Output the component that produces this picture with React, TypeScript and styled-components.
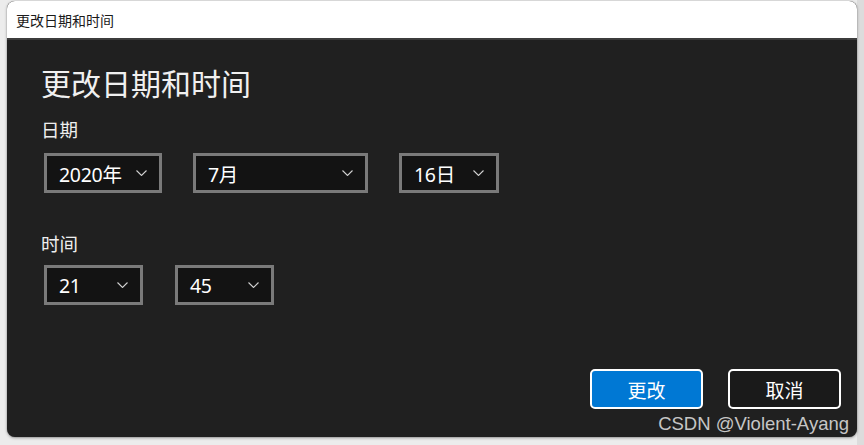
import React from "react";
import styled, { createGlobalStyle } from "styled-components";

const Global = createGlobalStyle`
  html, body { margin: 0; padding: 0; }
  body {
    background: #e4e4e4;
    font-family: "Noto Sans", "Noto Sans CJK SC", sans-serif;
    overflow: hidden;
  }
`;

const Page = styled.div`
  width: 864px;
  height: 445px;
  box-sizing: border-box;
  padding: 1px 0 0 7px;
  background: linear-gradient(to right, #ececec 0, #ececec 857px, #dcdcdc 857px);
`;

const Window = styled.div`
  width: 850px;
  height: 436px;
  border-radius: 8px;
  overflow: hidden;
  display: flex;
  flex-direction: column;
  background: #202020;
  box-shadow: 0 1px 3px rgba(0, 0, 0, 0.35), 0 0 1px rgba(0, 0, 0, 0.4);
`;

const TitleBar = styled.div`
  height: 37px;
  flex: none;
  background: #ffffff;
  border-bottom: 2px solid #3c3c3c;
  display: flex;
  align-items: center;
  padding-left: 9px;
  font-family: "Noto Sans CJK SC", sans-serif;
  font-size: 14px;
  color: #1a1a1a;
`;

const Body = styled.div`
  flex: 1;
  position: relative;
  padding: 20px 0 0 34px;
  display: flex;
  flex-direction: column;
  color: #f2f2f2;
`;

const Heading = styled.h1`
  margin: 0;
  font-family: "Noto Sans CJK SC", sans-serif;
  font-weight: 400;
  font-size: 30px;
  line-height: 44px;
  color: #f0f0f0;
`;

const Label = styled.div<{ $top: number }>`
  margin-top: ${(p) => p.$top}px;
  font-family: "Noto Sans CJK SC", sans-serif;
  font-size: 18.5px;
  line-height: 26px;
  color: #eeeeee;
`;

const Row = styled.div<{ $top: number; $gap: number }>`
  display: flex;
  margin-top: ${(p) => p.$top}px;
  margin-left: 3px;
  gap: ${(p) => p.$gap}px;
`;

const Combo = styled.div<{ $w: number }>`
  width: ${(p) => p.$w}px;
  height: 40px;
  box-sizing: border-box;
  border: 3px solid #7a7a7a;
  background: #131313;
  display: flex;
  align-items: center;
  justify-content: space-between;
  padding: 0 12px 0 12px;
  font-size: 19.5px;
  color: #ffffff;
`;

const ComboText = styled.span`
  font-family: "Noto Sans", "Noto Sans CJK SC", sans-serif;
  letter-spacing: -0.3px;
`;

const Chevron = () => (
  <svg width="11" height="6" viewBox="0 0 11 6" fill="none">
    <path d="M0.5 0.5 L5.5 5.5 L10.5 0.5" stroke="#cfcfcf" strokeWidth="1.1" />
  </svg>
);

const Footer = styled.div`
  position: absolute;
  right: 16px;
  bottom: 28px;
  display: flex;
  gap: 25px;
`;

const Button = styled.button<{ $primary?: boolean }>`
  width: 113px;
  height: 40px;
  box-sizing: border-box;
  border: 2px solid #ffffff;
  border-radius: 5px;
  background: ${(p) => (p.$primary ? "#0078d4" : "#1a1a1a")};
  color: #ffffff;
  font-family: "Noto Sans CJK SC", sans-serif;
  font-size: 19px;
  padding: 0;
  display: flex;
  align-items: center;
  justify-content: center;
`;

const Watermark = styled.div`
  position: absolute;
  right: 8px;
  bottom: 2px;
  font-family: "Liberation Sans", Arial, sans-serif;
  font-size: 18.5px;
  color: #c6c6c6;
`;

export default function App() {
  return (
    <>
      <Global />
      <Page>
        <Window>
          <TitleBar>更改日期和时间</TitleBar>
          <Body>
            <Heading>更改日期和时间</Heading>
            <Label $top={12}>日期</Label>
            <Row $top={11} $gap={31}>
              <Combo $w={118}>
                <ComboText>2020年</ComboText>
                <Chevron />
              </Combo>
              <Combo $w={175}>
                <ComboText>7月</ComboText>
                <Chevron />
              </Combo>
              <Combo $w={100}>
                <ComboText>16日</ComboText>
                <Chevron />
              </Combo>
            </Row>
            <Label $top={37}>时间</Label>
            <Row $top={9} $gap={32}>
              <Combo $w={99}>
                <ComboText>21</ComboText>
                <Chevron />
              </Combo>
              <Combo $w={99}>
                <ComboText>45</ComboText>
                <Chevron />
              </Combo>
            </Row>
            <Footer>
              <Button $primary>更改</Button>
              <Button>取消</Button>
            </Footer>
            <Watermark>CSDN @Violent-Ayang</Watermark>
          </Body>
        </Window>
      </Page>
    </>
  );
}
